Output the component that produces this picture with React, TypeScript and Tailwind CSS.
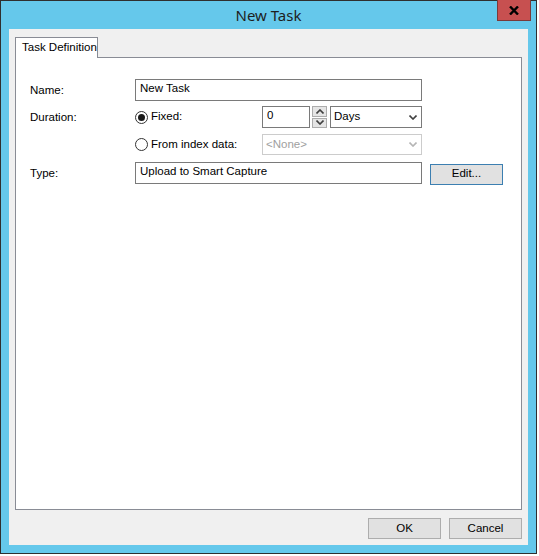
import React from 'react';

const Chevron = ({ up = false, color = '#404040' }: { up?: boolean; color?: string }) => (
  <svg width="8" height="5" viewBox="0 0 8 5" className={up ? 'rotate-180' : ''}>
    <path d="M0.5 0.5 L4 4 L7.5 0.5" fill="none" stroke={color} strokeWidth="1.6" />
  </svg>
);

const Radio = ({ checked }: { checked?: boolean }) => (
  <span className="w-[13px] h-[13px] rounded-full border border-[#333] bg-white flex items-center justify-center shrink-0">
    {checked && <span className="w-[7px] h-[7px] rounded-full bg-[#1a1a1a]" />}
  </span>
);

const Combo = ({ value, disabled, className }: { value: string; disabled?: boolean; className: string }) => (
  <div
    className={`flex items-center justify-between border bg-white pl-[3px] pr-[4px] ${
      disabled ? 'border-[#cccccc] text-[#a0a0a0]' : 'border-[#7a7a7a] text-black'
    } ${className}`}
  >
    <span>{value}</span>
    <Chevron color={disabled ? '#b5b5b5' : '#404040'} />
  </div>
);

const Button = ({ label, active, className }: { label: string; active?: boolean; className: string }) => (
  <div
    className={`flex items-center justify-center bg-[#e1e1e1] border ${
      active ? 'border-[#3c7fb1]' : 'border-[#adadad]'
    } ${className}`}
  >
    {label}
  </div>
);

export default function App() {
  return (
    <div
      className="w-[539px] h-[556px] bg-white text-[11.5px] text-black whitespace-nowrap"
      style={{ fontFamily: '"Liberation Sans", Arial, sans-serif' }}
    >
      <div className="w-[537px] h-[554px] border border-[#2f2f2f] bg-[#65c8eb] flex flex-col px-[8px] pb-[8px]">
        {/* title bar */}
        <div className="h-[28px] relative flex items-center justify-center shrink-0">
          <span className="text-[15px] text-[#1e1e1e] pt-[1px]" style={{ fontFamily: '"Noto Sans", sans-serif' }}>
            New Task
          </span>
          <div className="absolute -right-[3px] -top-[1px] w-[34px] h-[21px] bg-[#c75050] border border-t-0 border-[#7a3a3a] flex items-center justify-center">
            <svg width="10" height="9" viewBox="0 0 10 9">
              <path d="M1 0.5 L9 8.5 M9 0.5 L1 8.5" stroke="#000" strokeWidth="2.4" />
            </svg>
          </div>
        </div>

        {/* client area */}
        <div className="flex-1 bg-[#f0f0f0] flex flex-col px-[6px] pt-[8px] pb-[6px]">
          <div className="flex">
            <div className="w-[83px] h-[21px] bg-white border border-b-0 border-[#898c95] pl-[6px] flex items-center relative z-10 -mb-[1px]">
              Task Definition
            </div>
          </div>
          <div className="flex-1 bg-white border border-[#898c95] flex flex-col pl-[14px] pt-[21px]">
            {/* name */}
            <div className="flex items-center h-[22px]">
              <span className="w-[105px] pt-[1px]">Name:</span>
              <div className="w-[287px] h-[22px] border border-[#7a7a7a] px-[4px] flex items-center pb-[2px]">New Task</div>
            </div>

            {/* duration */}
            <div className="flex items-center h-[22px] mt-[5px]">
              <span className="w-[105px] pt-[1px]">Duration:</span>
              <div className="w-[127px] flex items-center gap-[3px]">
                <Radio checked />
                <span>Fixed:</span>
              </div>
              <div className="w-[48px] h-[22px] border border-[#7a7a7a] px-[4px] flex items-center pb-[2px]">0</div>
              <div className="w-[15px] h-[22px] ml-[2px] flex flex-col gap-[1px]">
                <div className="flex-1 bg-[#e5e5e5] border border-[#acacac] flex items-center justify-center">
                  <Chevron up />
                </div>
                <div className="flex-1 bg-[#e5e5e5] border border-[#acacac] flex items-center justify-center">
                  <Chevron />
                </div>
              </div>
              <Combo value="Days" className="w-[92px] h-[22px] ml-[3px]" />
            </div>

            {/* index data */}
            <div className="flex items-center h-[21px] mt-[6px]">
              <span className="w-[105px]" />
              <div className="w-[127px] flex items-center gap-[3px]">
                <Radio />
                <span>From index data:</span>
              </div>
              <Combo value="<None>" disabled className="w-[160px] h-[21px]" />
            </div>

            {/* type */}
            <div className="flex items-center h-[22px] mt-[7px]">
              <span className="w-[105px] pt-[2px]">Type:</span>
              <div className="w-[287px] h-[22px] border border-[#7a7a7a] px-[4px] flex items-center pb-[2px]">Upload to Smart Capture</div>
              <Button label="Edit..." active className="w-[73px] h-[21px] ml-[8px] mt-[2px]" />
            </div>
          </div>

          {/* buttons */}
          <div className="flex justify-end gap-[8px] mt-[8px]">
            <Button label="OK" className="w-[73px] h-[21px]" />
            <Button label="Cancel" className="w-[73px] h-[21px]" />
          </div>
        </div>
      </div>
    </div>
  );
}
